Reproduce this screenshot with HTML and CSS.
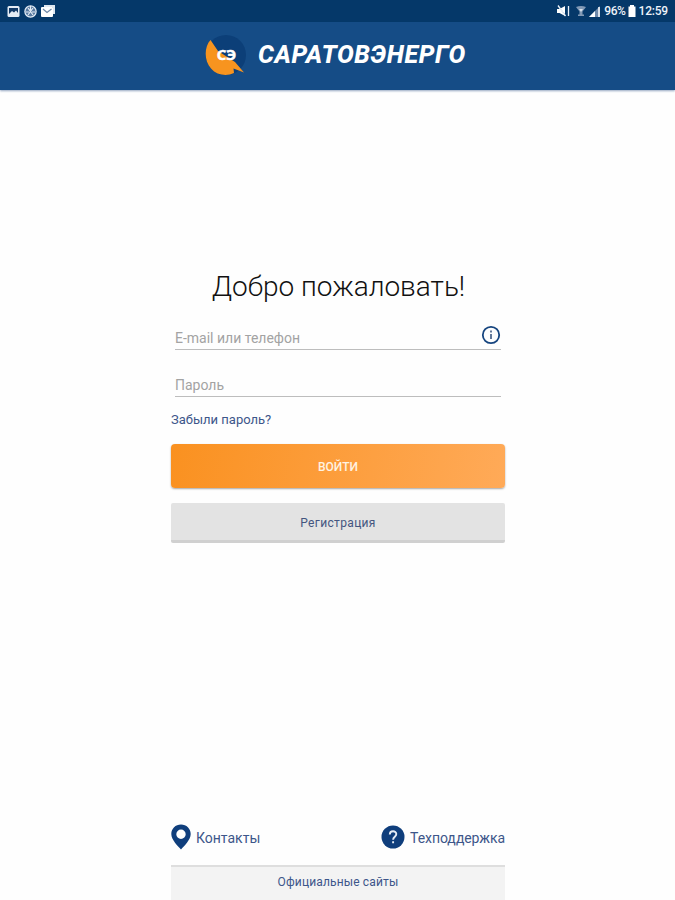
FILE: index.html
```html
<!DOCTYPE html>
<html lang="ru">
<head>
  <meta charset="UTF-8" />
  <meta name="viewport" content="width=device-width, initial-scale=1.0"/>
  <title>Саратовэнерго</title>
  <link rel="stylesheet" href="styles.css">
</head>
<body>

<div class="status-bar">
  <div class="status-left">
    <svg width="13" height="11" viewBox="0 0 13 11"><rect x="0.5" width="12" height="11" rx="1.5" fill="#e4ecf5"/><path d="M2 2h9v5L9 4.5 7 6.5 5 5 2 8z" fill="#123a68"/></svg>
    <svg width="13" height="13" viewBox="0 0 13 13"><circle cx="6.5" cy="6.5" r="5.6" fill="#58799f" stroke="#e4ecf5" stroke-width="1.3"/><path d="M4 3l5 7M9 3L4 10M6.5 1v4M2 7h3M8 7h3" stroke="#e4ecf5" stroke-width="1.2"/></svg>
    <svg width="14" height="12" viewBox="0 0 14 12"><path d="M3 0h11v9h-2V2.500H3z" fill="#dfe7f0"/><rect y="2" width="12" height="10" rx="1" fill="#fff"/><path d="M2 4l4 3.500L10.500 4" fill="none" stroke="#6d87a7" stroke-width="1.200"/></svg>
  </div>
  <div class="status-right">
    <svg width="13" height="12" viewBox="0 0 13 12"><path d="M0 4h2.500L8 1v10L2.500 8H0z" fill="#fff"/><path d="M1 1l8 10" stroke="#0a3a6c" stroke-width="0.800"/><path d="M1 .5L8.500 11M11.500 1v10" stroke="#e8eff7" stroke-width="1.300"/></svg>
    <svg class="wifi" width="10" height="10" viewBox="0 0 10 10"><path d="M0 1q5-2 10 0L6.500 5.500v3H8V10H2V8.500h1.500v-3z" fill="#8199b5"/><path d="M3 3h4L5 6z" fill="#d7e1ec"/></svg>
    <svg class="signal" width="12" height="11" viewBox="0 0 12 11"><path d="M0 11L11 0v11z" fill="#6e89aa"/><path d="M0 11l6-6v6z" fill="#fff"/><path d="M10 1v10" stroke="#fff" stroke-width="1.500"/></svg>
    <span class="percent">96%</span>
    <svg class="battery" width="8" height="12" viewBox="0 0 8 12"><path d="M2 0h4v1.500h1.500V12H.5V1.500H2z" fill="#fff"/></svg>
    <span class="clock">12:59</span>
  </div>
</div>

<header>
  <svg class="logo" width="42" height="42" viewBox="0 0 42 42">
    <circle cx="21" cy="21" r="20" fill="#0c3f78"/>
    <path d="M5.500 6C-1 13-1 27 6 34.500c6 7 16 8 23 4.500l-.5-4.500L39 38.500 30 28 13 17z" fill="#f7941f"/>
    <text x="21.500" y="25.500" text-anchor="middle">СЭ</text>
  </svg>
  <h1>САРАТОВЭНЕРГО</h1>
</header>

<main>
  <h2>Добро пожаловать!</h2>

  <div class="field">
    <span>E-mail или телефон</span>
    <svg width="20" height="20" viewBox="0 0 20 20"><circle cx="10" cy="10" r="8.200" fill="none" stroke="#16457f" stroke-width="1.800"/><path d="M10 5.500v2M10 9v5" stroke="#5c7396" stroke-width="1.900"/></svg>
  </div>
  <div class="field password"><span>Пароль</span></div>

  <a class="forgot">Забыли пароль?</a>
  <button class="login">ВОЙТИ</button>
  <button class="register">Регистрация</button>
</main>

<footer>
  <div class="links">
    <a class="contacts">
      <svg width="20" height="26" viewBox="0 0 20 26"><path fill-rule="evenodd" d="M10 .5C4.500.5.300 4.700.300 10c0 6 6.700 12 9.700 15.500C13 22 19.700 16 19.700 10 19.700 4.700 15.500.5 10 .5zm0 5a4.700 4.700 0 1 1 0 9.400 4.700 4.700 0 0 1 0-9.400z" fill="#0f3e7c"/></svg>
      <span>Контакты</span>
    </a>
    <a class="support">
      <svg width="24" height="24" viewBox="0 0 24 24"><circle cx="12" cy="12" r="11.500" fill="#0f3e7c"/><path d="M8.800 9.500c0-4.300 6.500-4.200 6.500-.4 0 2.600-3.200 2.700-3.200 5.600M12.100 16.300v2" fill="none" stroke="#e6edf6" stroke-width="1.900"/></svg>
      <span>Техподдержка</span>
    </a>
  </div>
  <div class="sites">Официальные сайты</div>
</footer>

</body>
</html>
```
FILE: styles.css
```css
* { box-sizing: border-box; }
body { font-family: Roboto, sans-serif; background: #fefefe; margin: 0; height: 900px; display: flex; flex-direction: column; overflow: hidden; color: #3d568a; }
svg { display: block; flex-shrink: 0; }

.status-bar { background: #053869; height: 22px; padding: 0 7px; display: flex; justify-content: space-between; align-items: center; color: #eef3f9; font-size: 12px; font-weight: 500; }
.status-left, .status-right { display: flex; align-items: center; }
.status-left { gap: 4px; }
.wifi { margin-left: 6px; }
.signal { margin-left: 3px; }
.percent { margin-left: 3px; letter-spacing: -0.4px; }
.battery { margin: 0 3px 0 2px; }
.clock { letter-spacing: -0.2px; }

header { background: #154c86; height: 68px; display: flex; align-items: center; padding: 0 0 2px 205px; box-shadow: 0 1px 2px rgba(21,60,120,0.45); }
.logo text { font: bold 15px "Open Sans", sans-serif; fill: #fff; stroke: #fff; stroke-width: 0.5px; }
h1 { margin: -2px 0 0 11px; color: #fff; font-size: 25px; font-weight: 800; font-style: italic; letter-spacing: 0.65px; white-space: nowrap; }

main { width: 334px; margin: 176px auto 0 171px; }
h2 { margin: 0 0 18px; padding-left: 1px; height: 40px; line-height: 41px; font-size: 28px; font-weight: 300; color: #111; text-align: center; white-space: nowrap; }
.field { margin: 0 4px; height: 26px; display: flex; align-items: center; justify-content: space-between; border-bottom: 1px solid #bdbdbd; color: #a3a3a3; font-size: 14px; }
.field span { padding-top: 2px; }
.field svg { margin: -4px 0 0 0; }
.password { margin-top: 21px; }
.forgot { display: block; margin-top: 14px; font-size: 13px; line-height: 18px; }
button { display: block; width: 100%; border: none; font-family: inherit; }
.login { margin-top: 15px; padding-top: 3px; height: 44px; border-radius: 4px; background: linear-gradient(100deg, #fa9120, #ffaa58); color: #fff3e2; font-size: 12px; font-weight: 500; box-shadow: 0 1px 2px rgba(0,0,0,0.35); }
.register { margin-top: 15px; padding-top: 3px; height: 40px; border-radius: 2px; background: #e3e3e3; border-bottom: 3px solid #d0d0d0; color: #44557f; font-size: 12px; font-weight: 400; letter-spacing: 0.35px; }

footer { width: 334px; margin: auto auto 0 171px; }
.links { display: flex; justify-content: space-between; align-items: center; height: 26px; font-size: 14px; }
.links a { display: flex; align-items: center; gap: 5px; }
.links span { padding-top: 2px; }
.support { letter-spacing: -0.07px; }
.sites { margin-top: 15px; height: 35px; line-height: 31px; border-top: 2px solid #dedede; background: #f3f3f3; text-align: center; font-size: 12px; letter-spacing: 0.15px; }
```
